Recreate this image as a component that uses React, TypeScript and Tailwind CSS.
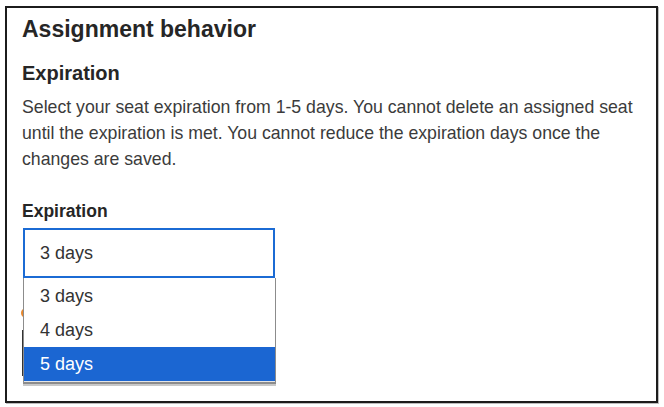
const options = ['3 days', '4 days', '5 days'];

export default function App() {
  const selected = '5 days';

  return (
    <div className="min-h-[407px] bg-white pl-[5px] pt-[6px] font-['Liberation_Sans',Arial,sans-serif]">
      <div className="h-[397px] w-[653px] border-2 border-[#1c1c1c] pl-[15px] pr-[8px] pt-[7px] shadow-[1px_1px_0_#bdbdbd]">
        {/* Section title */}
        <h1 className="text-[23px] font-bold leading-[29px] text-[#262626]">Assignment behavior</h1>

        <h2 className="mt-[16px] text-[20px] font-bold leading-[26px] text-[#262626]">Expiration</h2>
        <p className="mt-[8px] text-[17.7px] leading-[26px] text-[#3b3b3b]">
          Select your seat expiration from 1-5 days. You cannot delete an assigned seat until the expiration is met. You cannot reduce the expiration days once the changes are saved.
        </p>

        {/* Select field */}
        <label className="mt-[28px] block text-[17.5px] font-bold leading-[22px] text-[#262626]">Expiration</label>
        <div className="relative mt-[6px] w-[253px] pl-[1px]">
          <div className="flex h-[50px] items-center border-2 border-[#1b6bd4] pl-[15px] text-[18px] text-[#333]">
            3 days
          </div>

          {/* content behind the open list */}
          <div className="h-[110px]">
            <div className="ml-[-2px] mt-[30px] h-[10px] w-[10px] rounded-full border-2 border-[#e8872c]"></div>
            <div className="ml-[-1px] mt-[12px] h-[46px] w-[2px] bg-[#333]"></div>
          </div>

          {/* Open option list */}
          <div className="absolute left-[1px] top-[50px] w-[253px] border-x border-[#8c8c8c] bg-white shadow-[0_2px_0_#c8c8c8]">
            <div className="pt-[1px]">
              {options.map((o) => (
                <div
                  key={o}
                  className={`flex h-[34px] items-center pl-[16px] text-[18px] ${
                    o === selected ? 'bg-[#1b66d2] text-white' : 'text-[#333]'
                  }`}
                >
                  {o}
                </div>
              ))}
            </div>
            <div className="h-[1px] bg-[#e6e6e6]"></div>
            <div className="h-[2px] bg-[#8c8c8c]"></div>
          </div>
        </div>
      </div>
    </div>
  );
}
